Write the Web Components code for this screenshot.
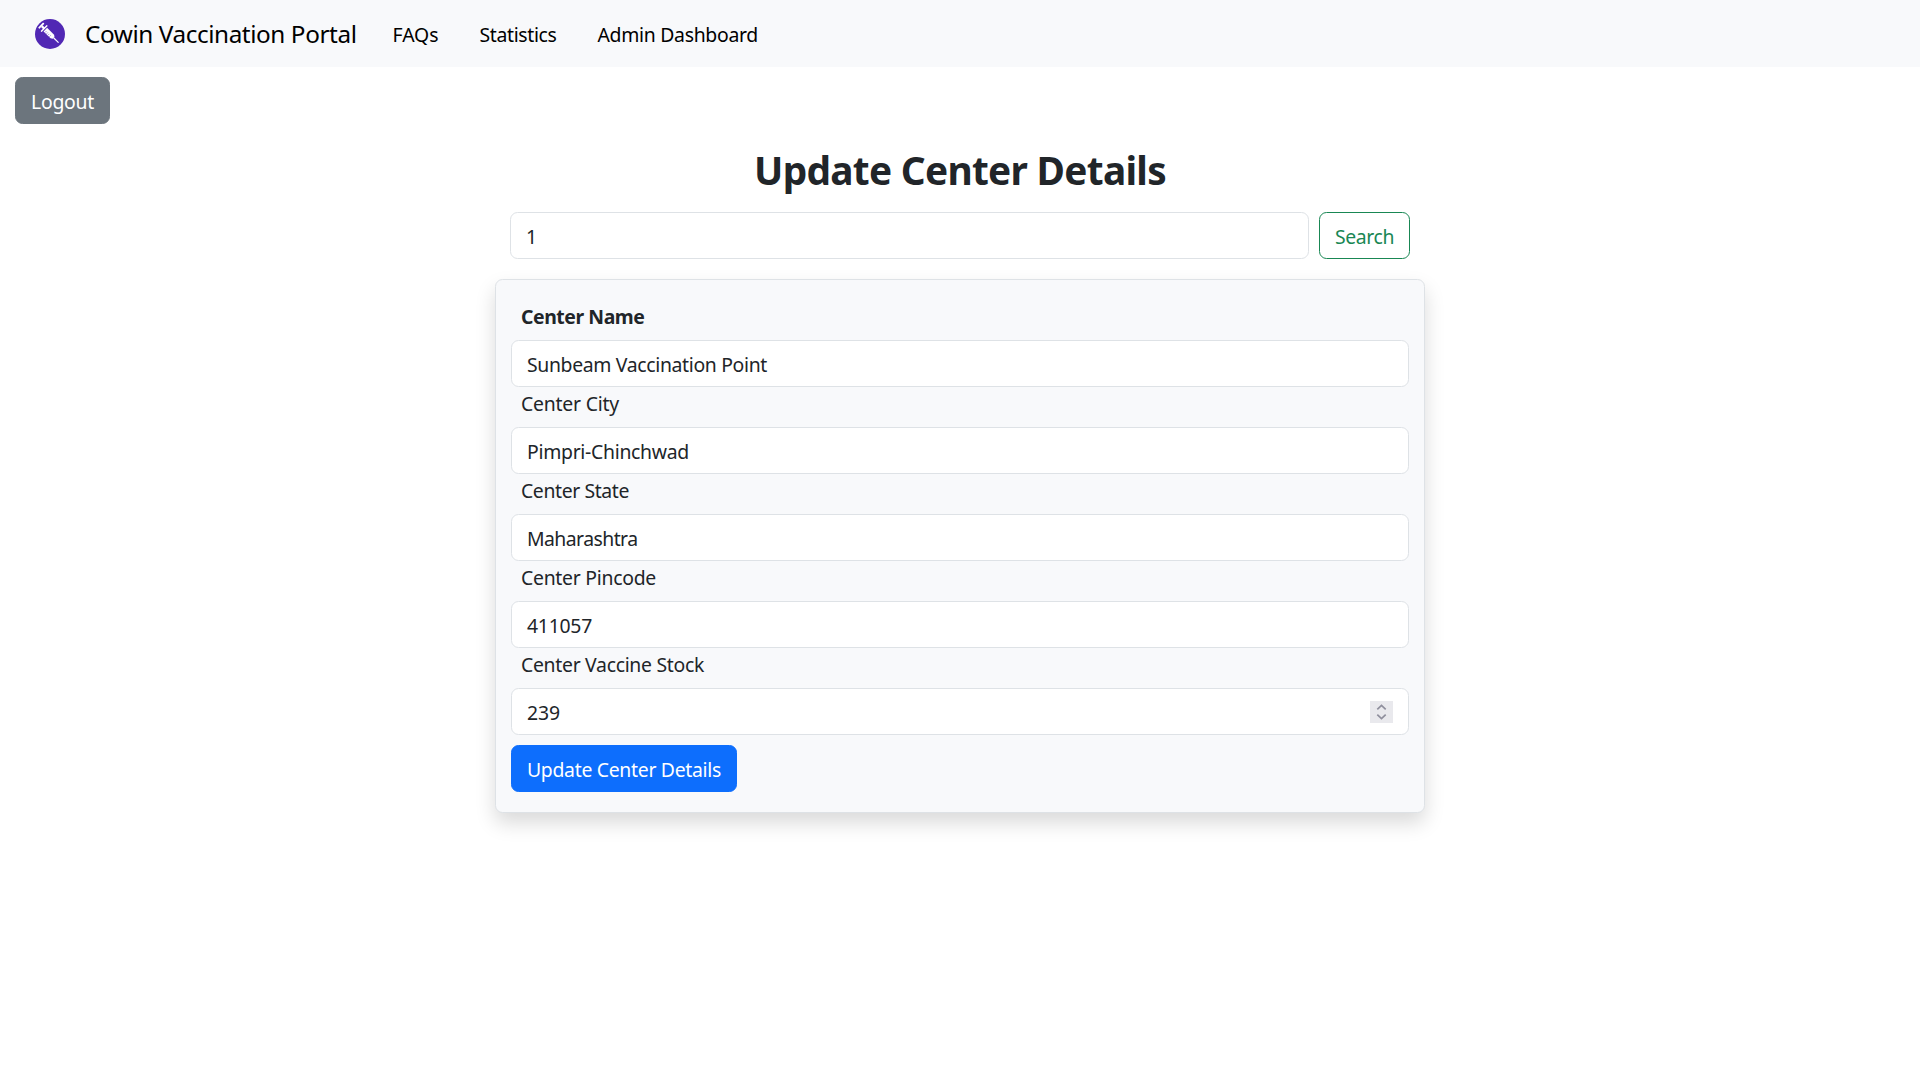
<!DOCTYPE html>
<html lang="en">
<head>
<meta charset="utf-8">
<title>Cowin Vaccination Portal</title>
<style>
html,body{margin:0;background:#fff}
body{min-height:100vh;font:19.4px/30px "Noto Sans","Open Sans",sans-serif;color:#212529}
</style>
</head>
<body>
<portal-page></portal-page>
<script>
const define=(name,html,init)=>customElements.define(name,class extends HTMLElement{
  constructor(){
    super();
    const t=document.createElement('template');
    t.innerHTML=html;
    this.attachShadow({mode:'open'}).append(t.content.cloneNode(true));
  }
  connectedCallback(){ if(init) init(this); }
});

/* A single line of text tracked to a given advance width. */
define('tracked-text',`<style>
:host{display:inline-block;white-space:nowrap}
span{display:inline-block}
</style><span><slot></slot></span>`,el=>{
  const w=parseFloat(el.getAttribute('w'));
  const s=el.shadowRoot.querySelector('span');
  const n=el.textContent.length;
  s.style.letterSpacing=((w-s.getBoundingClientRect().width)/n)+'px';
  el.style.width=w+'px';
});

define('portal-logo',`<style>:host{display:block;width:30px;height:30px}svg{display:block}</style>
<svg width="30" height="30" viewBox="0 0 30 30"><circle cx="15" cy="15" r="15" fill="#5128b4"/>
<g transform="translate(5.2 5.6) rotate(44.5)" fill="#fff">
<rect x="0.6" y="-3.6" width="1.8" height="7.2" rx=".5"/>
<rect x="2.2" y="-1.1" width="3.6" height="2.2"/>
<rect x="4.8" y="-4.4" width="1.5" height="8.8" rx=".5"/>
<path d="M7.2-2.5H17L18.8-1.2V1.2L17 2.5H7.2z"/>
<rect x="18.6" y="-.6" width="7.2" height="1.2" rx=".5"/>
<path d="M9 .2v2M11 .2v2M13 .2v2M15 .2v2" stroke="#8f75d0" stroke-width=".7"/>
</g></svg>`);

define('portal-nav',`<style>
:host{display:flex;align-items:center;height:67px;background:#f8f9fb;color:#000;padding-left:35px}
.brand{font-size:24.3px;line-height:38px;margin:0 36px 0 20px}
nav{display:flex;gap:41px;padding-top:3px}
portal-logo{margin-top:1px}
a{color:inherit;text-decoration:none;display:block}
</style><portal-logo></portal-logo>
<a class="brand"><tracked-text w="271.5">Cowin Vaccination Portal</tracked-text></a>
<nav><a><tracked-text w="46">FAQs</tracked-text></a><a><tracked-text w="77">Statistics</tracked-text></a><a><tracked-text w="160.5">Admin Dashboard</tracked-text></a></nav>`);

define('app-button',`<style>
:host{display:inline-block;--bg:#6c757d;--fg:#fff;--line:var(--bg)}
:host([kind=primary]){--bg:#0d6efd}
:host([kind=success]){--bg:#fff;--fg:#198754;--line:#198754}
button{display:flex;align-items:center;justify-content:center;box-sizing:border-box;height:47px;padding:2px 15px 0;font:inherit;color:var(--fg);background:var(--bg);border:1px solid var(--line);border-radius:7.5px}
</style><button><slot></slot></button>`);

define('app-field',`<style>
:host{display:block}
.label{display:block;height:30px;line-height:34px;margin:0 0 10px 10px}
.box{display:flex;align-items:center;justify-content:space-between;box-sizing:border-box;height:47px;padding:2px 15px 0;background:#fff;border:1px solid #dee2e6;border-radius:7.5px}
:host([plain]) .label{display:none}
:host([bold]) .label{font-weight:700}
</style><div class="label"><slot name="label"></slot></div><div class="box"><slot></slot><slot name="end"></slot></div>`);

define('number-spinner',`<style>:host{display:block;width:23px;height:22px;background:#e9e9ed;margin-top:-1px}svg{display:block}</style>
<svg width="23" height="22" viewBox="0 0 23 22" fill="none" stroke="#8f8f9d" stroke-width="1.7"><path d="M7.3 8.3L11.5 4.3L15.7 8.3M7.3 13.7L11.5 17.7L15.7 13.7"/></svg>`);

define('center-card',`<style>
:host{display:block;box-sizing:border-box;width:930px;height:534px;padding:20px 15px 0;background:#f8f9fb;border:1px solid #dee2e6;border-radius:7.5px;box-shadow:0 10px 20px rgba(0,0,0,.15)}
app-button{margin-top:10px}
</style>
<app-field bold><tracked-text slot="label" w="123.5">Center Name</tracked-text><tracked-text w="240">Sunbeam Vaccination Point</tracked-text></app-field>
<app-field><tracked-text slot="label" w="98">Center City</tracked-text><tracked-text w="162">Pimpri-Chinchwad</tracked-text></app-field>
<app-field><tracked-text slot="label" w="108">Center State</tracked-text><tracked-text w="110.5">Maharashtra</tracked-text></app-field>
<app-field><tracked-text slot="label" w="135">Center Pincode</tracked-text><tracked-text w="65">411057</tracked-text></app-field>
<app-field><tracked-text slot="label" w="183">Center Vaccine Stock</tracked-text><tracked-text w="33">239</tracked-text><number-spinner slot="end"></number-spinner></app-field>
<app-button kind="primary"><tracked-text w="194">Update Center Details</tracked-text></app-button>`);

define('portal-page',`<style>
:host{display:block;min-height:100vh}
.out{display:flex;padding:10px 15px 0}
main{display:flex;flex-direction:column;align-items:center}
h1{margin:22px 0 18px;font-size:38.8px;line-height:48px;font-weight:700}
.search{display:flex;gap:10px;width:900px;margin-bottom:20px}
.search app-field{flex:1}
</style><portal-nav></portal-nav>
<div class="out"><app-button><tracked-text w="63">Logout</tracked-text></app-button></div>
<main><h1><tracked-text w="412">Update Center Details</tracked-text></h1>
<div class="search"><app-field plain><tracked-text w="11">1</tracked-text></app-field><app-button kind="success"><tracked-text w="59">Search</tracked-text></app-button></div>
<center-card></center-card></main>`);
</script>
</body>
</html>
